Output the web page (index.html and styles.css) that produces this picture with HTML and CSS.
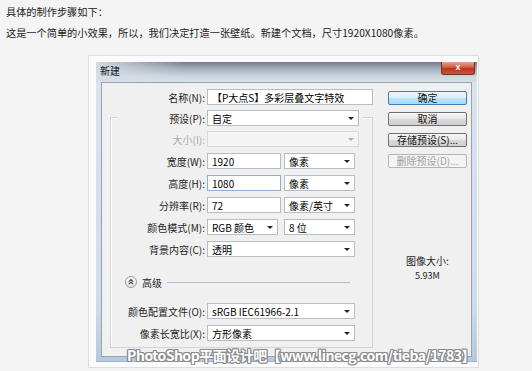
FILE: index.html
```html
<!DOCTYPE html>
<html lang="zh-CN">
<head>
  <meta charset="UTF-8" />
  <title>新建文档</title>
  <link rel="stylesheet" href="styles.css">
</head>
<body>
  <div class="article">
    <p>具体的制作步骤如下：</p>
    <p>这是一个简单的小效果，所以，我们决定打造一张壁纸。新建个文档，尺寸1920X1080像素。</p>

    <div class="figure">
      <div class="dialog">
        <div class="titlebar">
          <span class="title">新建</span>
          <span class="close">x</span>
        </div>

        <div class="panel">
          <div class="form">
            <div class="row">
              <span class="label">名称(N):</span>
              <span class="field w-name">【P大点S】多彩层叠文字特效</span>
            </div>

            <div class="group">
              <div class="row preset">
                <span class="label">预设(P):</span>
                <span class="field select w-wide"><span class="val">自定</span><i class="arrow"></i></span>
              </div>
              <div class="row size">
                <span class="label">大小(I):</span>
                <span class="field select w-wide disabled"><span class="val"></span><i class="arrow"></i></span>
              </div>
              <div class="row">
                <span class="label">宽度(W):</span>
                <span class="field w-num">1920</span>
                <span class="field select w-unit"><span class="val">像素</span><i class="arrow"></i></span>
              </div>
              <div class="row">
                <span class="label">高度(H):</span>
                <span class="field w-num focus">1080</span>
                <span class="field select w-unit"><span class="val">像素</span><i class="arrow"></i></span>
              </div>
              <div class="row">
                <span class="label">分辨率(R):</span>
                <span class="field w-num">72</span>
                <span class="field select w-unit"><span class="val">像素/英寸</span><i class="arrow"></i></span>
              </div>
              <div class="row">
                <span class="label">颜色模式(M):</span>
                <span class="field select w-mode"><span class="val">RGB 颜色</span><i class="arrow"></i></span>
                <span class="field select w-unit gap-6"><span class="val">8 位</span><i class="arrow"></i></span>
              </div>
              <div class="row">
                <span class="label">背景内容(C):</span>
                <span class="field select w-long"><span class="val">透明</span><i class="arrow"></i></span>
              </div>

              <div class="advanced">
                <svg class="toggle" width="12" height="12" viewBox="0 0 12 12">
                  <defs>
                    <linearGradient id="tg" x1="0" y1="0" x2="0" y2="1">
                      <stop offset="0" stop-color="#ffffff"/>
                      <stop offset="1" stop-color="#e2e2e2"/>
                    </linearGradient>
                  </defs>
                  <circle cx="6" cy="6" r="5.5" fill="url(#tg)" stroke="#9a9a9a"/>
                  <path d="M3.8 5.6 L6 3.6 L8.2 5.6 M3.8 8.2 L6 6.2 L8.2 8.2" fill="none" stroke="#333" stroke-width="1.1"/>
                </svg>
                <span class="adv-text">高级</span>
                <span class="rule"></span>
              </div>

              <div class="row profile">
                <span class="label">颜色配置文件(O):</span>
                <span class="field select w-long"><span class="val">sRGB IEC61966-2.1</span><i class="arrow"></i></span>
              </div>
              <div class="row">
                <span class="label">像素长宽比(X):</span>
                <span class="field select w-long"><span class="val">方形像素</span><i class="arrow"></i></span>
              </div>
            </div>
          </div>

          <div class="side">
            <button class="btn default">确定</button>
            <button class="btn">取消</button>
            <button class="btn">存储预设(S)...</button>
            <button class="btn" disabled>删除预设(D)...</button>

            <div class="info">
              <div class="info-title">图像大小:</div>
              <div class="info-value">5.93M</div>
            </div>
          </div>
        </div>
      </div>

      <div class="watermark">PhotoShop平面设计吧【www.linecg.com/tieba/1783】</div>
    </div>
  </div>
</body>
</html>
```

FILE: styles.css
```css
body {
  margin: 0;
  background: #f4f4f4;
  font-family: "Noto Sans CJK SC", "Liberation Sans", sans-serif;
  color: #222;
}

.article {
  padding: 3px 0 0 6px;
}

.article p {
  margin: 0 0 3px;
  font-size: 10.2px;
  line-height: 18px;
}

.figure {
  position: relative;
  box-sizing: border-box;
  width: 391px;
  height: 313px;
  margin: 13px 0 0 82px;
  padding: 6px 1px 0 7px;
  background: #fbfbfb;
  border: 1px solid #dedede;
}

.dialog {
  box-sizing: border-box;
  width: 381px;
  height: 300px;
  display: flex;
  flex-direction: column;
  background: linear-gradient(to bottom, #dbe4ee, #cfdcea 80%, #b6c9df);
  border-bottom: 1px solid #9fb5cf;
  font-size: 10px;
  color: #1e1e1e;
}

.titlebar {
  height: 20px;
  display: flex;
  justify-content: space-between;
  align-items: flex-start;
  background:
    linear-gradient(to right, rgba(214, 222, 231, 0.95), rgba(214, 222, 231, 0) 90px),
    linear-gradient(to bottom, #737d89 0%, #a6b0bb 35%, #cbd4dd 70%, #d8e0e8 100%);
}

.title {
  padding: 2px 0 0 4px;
  line-height: 13px;
  color: #111;
}

.close {
  box-sizing: border-box;
  width: 34px;
  height: 13px;
  margin-right: 2px;
  background: linear-gradient(to bottom, #e6a391, #cf5a41 45%, #b9351f 55%, #c9543c);
  border: 1px solid #7d2c20;
  border-top: 0;
  border-radius: 0 0 3px 3px;
  color: #fff;
  font: bold 9px/11px "Liberation Sans", sans-serif;
  text-align: center;
}

.panel {
  flex: 1;
  display: flex;
  margin: 0 5px 4px;
  background: #f0f0f0;
  border: 1px solid #97a3b1;
}

.form {
  box-sizing: border-box;
  width: 271px;
  padding: 6px 0 0 8px;
}

.row {
  display: flex;
  align-items: center;
  height: 16px;
}

.label {
  width: 95px;
  padding-right: 2px;
  box-sizing: content-box;
  text-align: right;
  white-space: nowrap;
  color: #1e1e1e;
}

.field {
  box-sizing: border-box;
  height: 16px;
  padding-left: 4px;
  display: flex;
  align-items: center;
  background: #fff;
  border: 1px solid #b8bcc4;
  color: #000;
  white-space: nowrap;
  overflow: hidden;
}

.field.focus {
  border-color: #8eaed3;
}

.select .val {
  flex: 1;
}

.arrow {
  width: 0;
  height: 0;
  margin-right: 4px;
  border-left: 3px solid transparent;
  border-right: 3px solid transparent;
  border-top: 3px solid #222;
}

.field.disabled {
  background: #f4f4f4;
  border-color: #d9d9d9;
}

.disabled .arrow {
  border-top-color: #b0b0b0;
}

.w-name { width: 166px; }
.w-wide { width: 152px; }
.w-num  { width: 74px; }
.w-unit { width: 71px; margin-left: 3px; }
.w-mode { width: 71px; }
.w-unit.gap-6 { margin-left: 6px; }
.w-long { width: 148px; }

.group {
  display: flex;
  flex-direction: column;
  align-items: flex-start;
  margin-top: 12px;
  padding-bottom: 6px;
  border: 1px solid #d0d6dc;
  box-shadow: inset 1px 1px 0 #fff;
}

.group .row {
  margin-top: 6px;
}

.group .label {
  width: 94px;
}

.group .row.preset {
  margin: -8px 0 0 7px;
  padding-right: 3px;
  background: #f0f0f0;
}

.group .row.preset .label {
  width: 87px;
}

.group .row.size {
  margin-top: 5px;
}

.size .label {
  color: #a8a8a8;
}

.advanced {
  align-self: stretch;
  display: flex;
  align-items: center;
  height: 14px;
  margin: 18px 22px 0 14px;
}

.adv-text {
  margin: 0 5px 0 5px;
}

.rule {
  flex: 1;
  height: 1px;
  background: #b9bec4;
}

.group .row.profile {
  margin-top: 14px;
}

.side {
  display: flex;
  flex-direction: column;
  align-items: center;
  width: 79px;
  margin-left: 15px;
  padding-top: 8px;
}

.btn {
  box-sizing: border-box;
  width: 79px;
  height: 14px;
  margin: 0 0 7px;
  padding: 0;
  font: inherit;
  line-height: 12px;
  color: #111;
  background: linear-gradient(to bottom, #f6f6f6, #e8e8e8 50%, #d9d9d9 51%, #cfcfcf);
  border: 1px solid #707070;
  border-radius: 2px;
}

.btn.default {
  border-color: #3c7fb1;
  background: linear-gradient(to bottom, #eaf6fd, #d9f0fc 50%, #bee6fd 51%, #a7d9f5);
}

.btn:disabled {
  color: #a0a0a0;
  border-color: #b5b5b5;
  background: #f4f4f4;
}

.info {
  margin-top: 79px;
  text-align: center;
}

.info-title {
  line-height: 14px;
}

.info-value {
  margin-top: 2px;
  font-size: 9px;
  line-height: 12px;
}

.watermark {
  position: absolute;
  right: 3px;
  bottom: 3px;
  font-size: 14px;
  font-weight: bold;
  line-height: 18px;
  letter-spacing: -0.5px;
  color: #fff;
  white-space: nowrap;
  text-shadow:
    1px 0 0 #8a8a8a, -1px 0 0 #8a8a8a, 0 1px 0 #8a8a8a, 0 -1px 0 #8a8a8a,
    1px 1px 0 #8a8a8a, -1px -1px 0 #8a8a8a, 1px -1px 0 #8a8a8a, -1px 1px 0 #8a8a8a;
}
```
